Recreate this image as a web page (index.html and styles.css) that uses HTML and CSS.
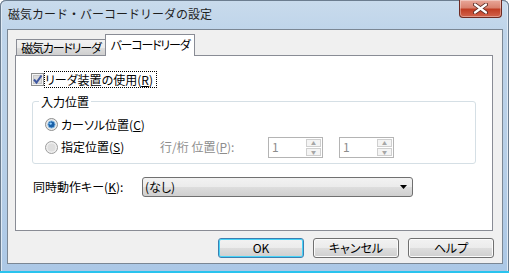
FILE: index.html
```html
<!DOCTYPE html>
<html lang="ja">
<head>
  <meta charset="UTF-8">
  <title>磁気カード・バーコードリーダの設定</title>
  <link rel="stylesheet" href="styles.css">
</head>
<body>
  <div class="window">
    <div class="titlebar">
      <span class="title">磁気カード・バーコードリーダの設定</span>
      <div class="close">
        <svg width="15" height="11" viewBox="0 0 15 11">
          <path d="M2 1.5 L13 9.5 M13 1.5 L2 9.5" stroke="#5a2a24" stroke-width="4" stroke-linecap="round"/>
          <path d="M2 1.5 L13 9.5 M13 1.5 L2 9.5" stroke="#fff" stroke-width="2.2" stroke-linecap="round"/>
        </svg>
      </div>
    </div>

    <div class="client">
      <div class="tabs">
        <div class="tab">磁気カードリーダ</div>
        <div class="tab active">バーコードリーダ</div>
      </div>

      <div class="panel">
        <div class="check-row">
          <svg class="checkbox" width="13" height="13" viewBox="0 0 13 13">
            <rect x="0.5" y="0.5" width="12" height="12" fill="#f4f4f4" stroke="#8e8f8f"/>
            <rect x="2.5" y="2.5" width="8" height="8" fill="#dcdcdc" stroke="#c6c6c6"/>
            <path d="M3 6.5 L5.5 9.5 L10.5 2.5" fill="none" stroke="#3e57a0" stroke-width="2"/>
          </svg>
          <span class="focus">リーダ装置の使用(<u>R</u>)</span>
        </div>

        <fieldset class="group">
          <legend>入力位置</legend>
          <div class="radio-row">
            <svg class="radio" width="13" height="13" viewBox="0 0 13 13">
              <circle cx="6.5" cy="6.5" r="6" fill="#eaeaea" stroke="#8e8f8f"/>
              <circle cx="6.5" cy="6.5" r="3.6" fill="#1b5fa6" stroke="#7fb6e2"/>
              <circle cx="5.6" cy="5.6" r="1.2" fill="#8fd0ff"/>
            </svg>
            <span>カーソル位置(<u>C</u>)</span>
          </div>
          <div class="radio-row">
            <svg class="radio" width="13" height="13" viewBox="0 0 13 13">
              <circle cx="6.5" cy="6.5" r="6" fill="#efefef" stroke="#9c9c9c"/>
              <circle cx="6.5" cy="6.5" r="4" fill="#dedede"/>
            </svg>
            <span class="radio-label">指定位置(<u>S</u>)</span>
            <span class="muted">行/桁 位置(<u>P</u>):</span>
            <div class="spin">
              <span class="spin-value">1</span>
              <div class="spin-buttons">
                <div class="spin-btn">▲</div>
                <div class="spin-btn">▼</div>
              </div>
            </div>
            <div class="spin">
              <span class="spin-value">1</span>
              <div class="spin-buttons">
                <div class="spin-btn">▲</div>
                <div class="spin-btn">▼</div>
              </div>
            </div>
          </div>
        </fieldset>

        <div class="combo-row">
          <span class="combo-label">同時動作キー(<u>K</u>):</span>
          <div class="combo">
            <span>(なし)</span>
            <svg width="7" height="4" viewBox="0 0 7 4"><path d="M0 0 H7 L3.5 4 Z" fill="#000"/></svg>
          </div>
        </div>
      </div>

      <div class="buttons">
        <div class="button default">OK</div>
        <div class="button">キャンセル</div>
        <div class="button">ヘルプ</div>
      </div>
    </div>
  </div>
</body>
</html>
```

FILE: styles.css
```css
body {
  margin: 0;
  font-family: "Noto Sans CJK JP", "Noto Sans", sans-serif;
  font-size: 12px;
  line-height: 16px;
  color: #000;
  background: #fff;
}
.window {
  width: 509px;
  height: 273px;
  box-sizing: border-box;
  padding: 0 6px 7px 7px;
  display: flex;
  flex-direction: column;
  background: linear-gradient(180deg, #c9dbec 0%, #bed4ea 12%, #b7cfe7 60%, #acc8e6 100%);
  border-bottom: 2px solid #29c3ee;
  border-radius: 6px 6px 0 0;
  box-shadow: inset 1px 0 0 #6c7d8f, inset -1px 0 0 #6c7d8f, inset 0 1px 0 #6c7d8f, inset 2px 0 0 #dfeaf5, inset -2px 0 0 #dfeaf5;
}
.titlebar {
  height: 29px;
  display: flex;
  align-items: flex-start;
}
.title {
  margin: 6px 0 0 1px;
  color: #1e1e1e;
}
.close {
  margin-left: auto;
  margin-right: 1px;
  width: 43px;
  height: 18px;
  box-sizing: border-box;
  border: 1px solid #6e2a22;
  border-top: none;
  border-radius: 0 0 4px 4px;
  background: linear-gradient(180deg, #e9a799 0%, #d9826f 45%, #c03d24 55%, #d2634c 100%);
  display: flex;
  align-items: center;
  justify-content: center;
  box-shadow: inset 0 0 0 1px rgba(255,255,255,0.35);
}
.client {
  height: 237px;
  box-sizing: border-box;
  border: 1px solid #7b8794;
  background: #f0f0f0;
  display: flex;
  flex-direction: column;
  font-feature-settings: "palt";
  white-space: nowrap;
}
.tabs {
  display: flex;
  align-items: flex-end;
  height: 21px;
  margin: 4px 0 0 8px;
}
.tab {
  width: 89px;
  height: 16px;
  box-sizing: border-box;
  border: 1px solid #898c95;
  border-bottom: none;
  border-right: none;
  background: linear-gradient(180deg, #f2f2f2 0%, #ebebeb 50%, #dddddd 51%, #cfcfcf 100%);
  text-align: center;
  line-height: 15px;
  letter-spacing: -1.2px;
  overflow: hidden;
}
.tab.active {
  width: 90px;
  height: 22px;
  margin-bottom: -1px;
  border-right: 1px solid #898c95;
  background: #fff;
  position: relative;
  z-index: 1;
  line-height: 19px;
}
.panel {
  width: 478px;
  height: 176px;
  box-sizing: border-box;
  margin-left: 7px;
  border: 1px solid #898c95;
  background: #fff;
}
.check-row {
  display: flex;
  align-items: center;
  height: 15px;
  margin: 16px 0 0 15px;
}
.checkbox {
  margin-right: 1px;
}
.focus {
  outline: 1px dotted #000;
  line-height: 15px;
  padding-right: 3px;
}
u {
  text-decoration: underline;
  text-underline-offset: 1px;
}
.group {
  width: 444px;
  box-sizing: border-box;
  margin: 7px 0 0 16px;
  padding: 0 0 5px 12px;
  border: 1px solid #d5dfe5;
  border-radius: 3px;
  height: 70px;
}
.group legend {
  margin-left: -6px;
  padding: 0 2px;
  line-height: 16px;
}
.radio-row {
  display: flex;
  align-items: center;
  height: 20px;
  margin-top: 5px;
}
.radio-row + .radio-row {
  height: 21px;
  margin-top: 2px;
}
.radio {
  margin-right: 3px;
}
.radio-label {
  width: 99px;
}
.muted {
  color: #8d8d8d;
  width: 108px;
}
.spin {
  width: 55px;
  height: 21px;
  box-sizing: border-box;
  border: 1px solid #b4b4b4;
  background: #fff;
  display: flex;
  align-items: center;
  margin-right: 16px;
}
.spin-value {
  color: #8d8d8d;
  padding-left: 3px;
  flex: 1;
}
.spin-buttons {
  display: flex;
  flex-direction: column;
  gap: 1px;
  margin-right: 1px;
}
.spin-btn {
  width: 15px;
  height: 8px;
  box-sizing: border-box;
  border: 1px solid #cfcfcf;
  background: #f4f4f4;
  color: #a6a6a6;
  font-size: 5px;
  line-height: 6px;
  text-align: center;
}
.combo-row {
  display: flex;
  align-items: center;
  margin: 13px 0 0 17px;
}
.combo-label {
  width: 109px;
}
.combo {
  width: 271px;
  height: 20px;
  box-sizing: border-box;
  border: 1px solid #707070;
  border-radius: 3px;
  background: linear-gradient(180deg, #f2f2f2 0%, #ebebeb 50%, #dddddd 51%, #cfcfcf 100%);
  display: flex;
  align-items: center;
  justify-content: space-between;
  padding: 0 5px 0 2px;
}
.buttons {
  display: flex;
  justify-content: flex-end;
  gap: 9px;
  margin: 7px 8px 0 0;
}
.button {
  width: 86px;
  height: 20px;
  box-sizing: border-box;
  border: 1px solid #707070;
  border-radius: 3px;
  background: linear-gradient(180deg, #f2f2f2 0%, #ebebeb 50%, #dddddd 51%, #cfcfcf 100%);
  text-align: center;
  line-height: 18px;
  box-shadow: inset 0 0 0 1px #fbfbfb;
}
.button.default {
  border-color: #3c7fb1;
  box-shadow: inset 0 0 0 1px #48d4f8;
}
```
